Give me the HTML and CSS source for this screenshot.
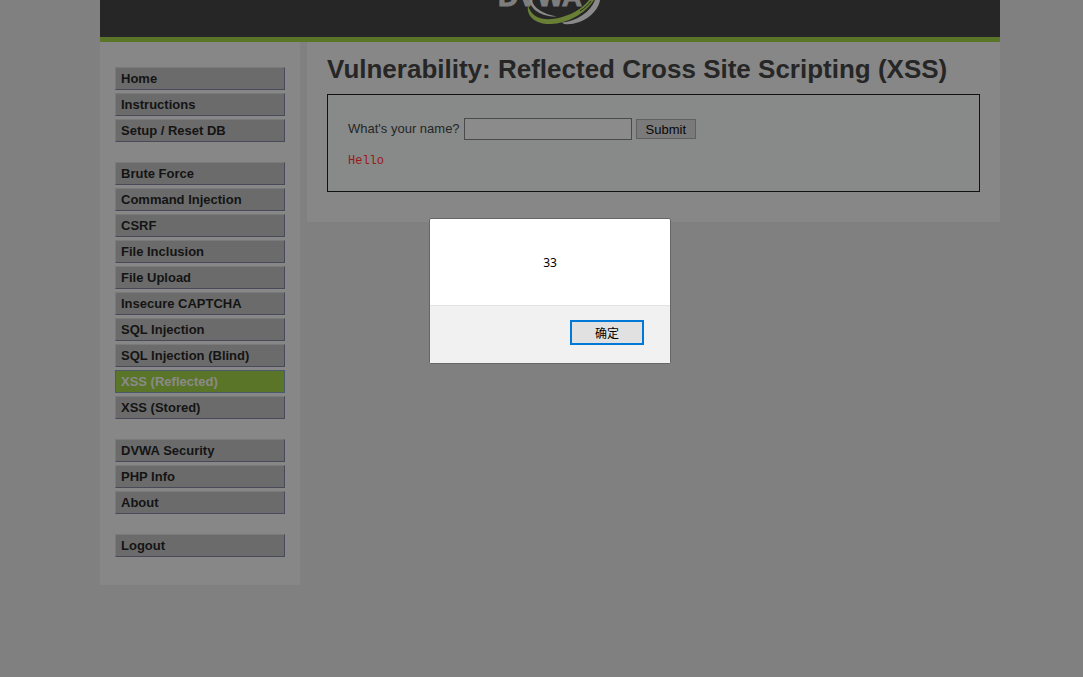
FILE: index.html
```html
<!DOCTYPE html>
<html lang="en">
<head>
<meta charset="utf-8">
<title>Vulnerability: Reflected Cross Site Scripting (XSS)</title>
<link rel="stylesheet" href="styles.css">
</head>
<body>
<div class="page">
  <div class="container">
    <header class="header">
      <svg class="logo" viewBox="0 0 120 37" role="img" aria-label="DVWA">
        <text class="logo-text" x="8" y="6">DVWA</text>
        <path class="swoosh-gray" d="M42 0C43 8 54 14.500 67 16.500C54 17.500 40 10 39.500 0Z"/>
        <path class="swoosh-gray" d="M110 0C108 14 90 26 74 24L72 22.500C86 21 100 13 105 0Z"/>
        <path class="swoosh-green" d="M38 5C41 17 51 21 66 18.500C81 15.500 92 9 99 0L104 0C95 14 77 23.500 61 24C45 24.500 36 16 38 5Z"/>
        <path class="swoosh-split" d="M90 11C95 8 98 5 101 1"/>
      </svg>
    </header>
    <div class="columns">
      <nav class="sidebar">
        <ul class="menu">
          <li><a href="#">Home</a></li>
          <li><a href="#">Instructions</a></li>
          <li><a href="#">Setup / Reset DB</a></li>
        </ul>
        <ul class="menu">
          <li><a href="#">Brute Force</a></li>
          <li><a href="#">Command Injection</a></li>
          <li><a href="#">CSRF</a></li>
          <li><a href="#">File Inclusion</a></li>
          <li><a href="#">File Upload</a></li>
          <li><a href="#">Insecure CAPTCHA</a></li>
          <li><a href="#">SQL Injection</a></li>
          <li><a href="#">SQL Injection (Blind)</a></li>
          <li><a href="#" class="selected">XSS (Reflected)</a></li>
          <li><a href="#">XSS (Stored)</a></li>
        </ul>
        <ul class="menu">
          <li><a href="#">DVWA Security</a></li>
          <li><a href="#">PHP Info</a></li>
          <li><a href="#">About</a></li>
        </ul>
        <ul class="menu">
          <li><a href="#">Logout</a></li>
        </ul>
      </nav>
      <main class="content">
        <h1>Vulnerability: Reflected Cross Site Scripting (XSS)</h1>
        <div class="vulnerable">
          <form class="name-form">
            <label for="name">What's your name?</label>
            <input id="name" type="text" name="name">
            <button type="submit">Submit</button>
          </form>
          <pre class="greeting">Hello</pre>
        </div>
      </main>
    </div>
  </div>
  <div class="alert" role="alertdialog" aria-labelledby="alert-message">
    <p id="alert-message" class="alert-message">33</p>
    <div class="alert-actions"><button type="button">确定</button></div>
  </div>
</div>
</body>
</html>
```

FILE: styles.css
```css
* {
  box-sizing: border-box;
}

body {
  margin: 0;
  background: #808080;
  color: #262626;
  font: 13px/20px "Liberation Sans", Arial, sans-serif;
}

.page {
  position: relative;
  min-height: 100vh;
  margin-left: 17px;
}

.container {
  max-width: 900px;
  margin: 0 auto;
}

.header {
  display: flex;
  justify-content: center;
  background: #262626;
  border-bottom: 5px solid #5a7527;
}

.logo {
  display: block;
  width: 120px;
}

.logo-text {
  fill: #7e7e7e;
  stroke: #7e7e7e;
  stroke-width: 1px;
  font: bold 28px "Liberation Sans", Arial, sans-serif;
}

.swoosh-gray {
  fill: #8a8a8a;
}

.swoosh-green {
  fill: #687f35;
}

.swoosh-split {
  fill: none;
  stroke: #262626;
  stroke-width: 1px;
}

.columns {
  display: flex;
  align-items: flex-start;
  gap: 7px;
}

.sidebar {
  display: flex;
  flex: 0 0 200px;
  flex-direction: column;
  gap: 20px;
  padding: 25px 15px 28px;
  background: #878787;
}

.menu {
  display: flex;
  flex-direction: column;
  gap: 3px;
  margin: 0;
  padding: 0;
  list-style: none;
}

.menu a {
  display: block;
  padding: 1px 5px;
  border: 1px solid;
  border-color: #7a7a7a #484a59 #484a59 #7a7a7a;
  background: #6b6b6b;
  color: #141414;
  font-weight: bold;
  line-height: 19px;
  text-decoration: none;
}

.menu a.selected {
  border-color: #4a5a6b;
  background: #5a7527;
  color: #8a8a8a;
}

.content {
  flex: 1;
  padding: 11px 20px 30px;
  background: #878787;
}

h1 {
  margin: 0 0 9px;
  font-size: 26px;
  line-height: 32px;
}

.vulnerable {
  padding: 20px;
  border: 1px solid #111;
  background: #878a88;
}

.name-form {
  display: flex;
  align-items: center;
  gap: 4px;
  height: 28px;
}

.name-form input {
  width: 168px;
  height: 22px;
  border: 1px solid #4a4a4a;
  background: #8b8b8b;
}

.name-form button {
  height: 20px;
  padding: 0 9px;
  border: 1px solid #606060;
  background: #7a7a7a;
  color: #080808;
  font: 13px "Liberation Sans", Arial, sans-serif;
}

.greeting {
  margin: 8px 0 0;
  color: #9c1717;
  font: 12px/20px "Liberation Mono", monospace;
}

.alert {
  position: absolute;
  top: 218px;
  left: 50%;
  width: 242px;
  border: 1px solid #666;
  border-radius: 2px;
  background: #fff;
  color: #000;
  transform: translateX(-50%);
  font: 12px/20px "Noto Sans", "Noto Sans CJK SC", sans-serif;
}

.alert-message {
  margin: 0;
  padding: 34px 20px 32px;
  text-align: center;
}

.alert-actions {
  display: flex;
  justify-content: flex-end;
  padding: 14px 26px 18px;
  border-top: 1px solid #e3e3e3;
  background: #f1f1f1;
}

.alert-actions button {
  width: 74px;
  height: 25px;
  padding: 0;
  border: 2px solid #0078d7;
  background: #e1e1e1;
  color: #000;
  font: 12px/20px "Noto Sans CJK SC", sans-serif;
}
```
